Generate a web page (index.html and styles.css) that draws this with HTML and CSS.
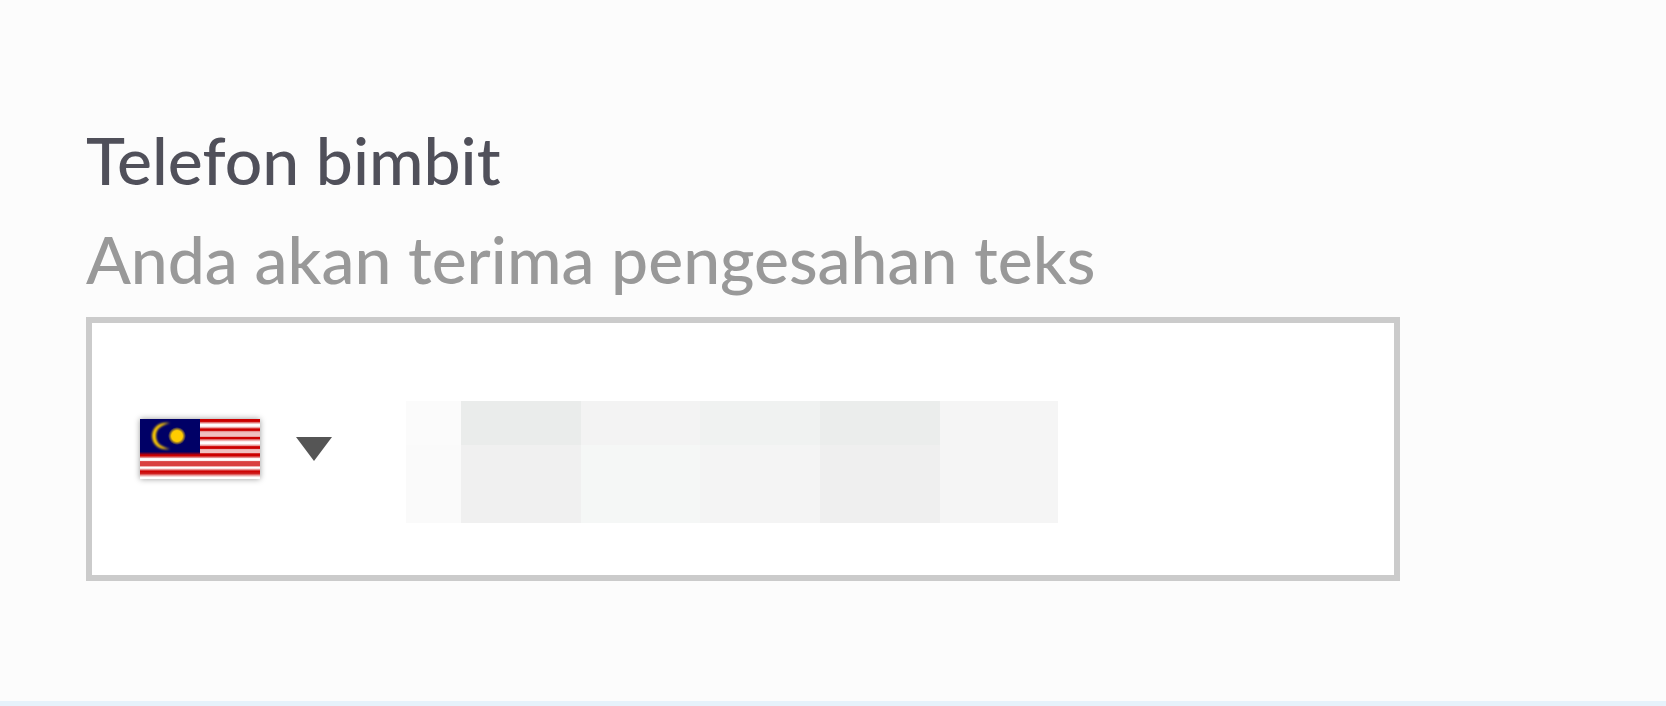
FILE: index.html
```html
<!DOCTYPE html>
<html lang="ms">
<head>
<meta charset="utf-8">
<meta name="viewport" content="width=device-width, initial-scale=1">
<title>Telefon bimbit</title>
<link rel="stylesheet" href="styles.css">
</head>
<body>
<main class="form">
  <label class="label" for="phone">Telefon bimbit</label>
  <p class="hint" id="phone-hint">Anda akan terima pengesahan teks</p>
  <div class="field">
    <button class="country" type="button" aria-label="Malaysia" aria-haspopup="listbox">
      <svg class="flag" viewBox="0 0 120 60" aria-hidden="true">
        <defs>
          <linearGradient id="stripes" x1="0" y1="0" x2="0" y2="60" gradientUnits="userSpaceOnUse">
            <stop offset="0" stop-color="#c00"/><stop offset=".04" stop-color="#c00"/>
            <stop offset=".06" stop-color="#e58080"/><stop offset=".09" stop-color="#fff"/><stop offset=".12" stop-color="#fff"/>
            <stop offset=".15" stop-color="#e58080"/>
            <stop offset=".165" stop-color="#c00"/><stop offset=".19" stop-color="#c00"/>
            <stop offset=".21" stop-color="#e8a0a0"/><stop offset=".23" stop-color="#f0c0c0"/>
            <stop offset=".29" stop-color="#f0c0c0"/><stop offset=".3" stop-color="#c00"/>
            <stop offset=".325" stop-color="#c00"/><stop offset=".345" stop-color="#e58080"/>
            <stop offset=".38" stop-color="#fff"/><stop offset=".41" stop-color="#fff"/>
            <stop offset=".45" stop-color="#e58080"/><stop offset=".46" stop-color="#c00"/>
            <stop offset=".49" stop-color="#c00"/><stop offset=".51" stop-color="#f0c0c0"/>
            <stop offset=".56" stop-color="#f0c0c0"/><stop offset=".58" stop-color="#c00"/>
            <stop offset=".61" stop-color="#c00"/><stop offset=".64" stop-color="#e58080"/>
            <stop offset=".66" stop-color="#fff"/><stop offset=".69" stop-color="#fff"/>
            <stop offset=".71" stop-color="#d94040"/><stop offset=".78" stop-color="#d94040"/>
            <stop offset=".8" stop-color="#fff"/><stop offset=".82" stop-color="#fff"/>
            <stop offset=".85" stop-color="#e06666"/><stop offset=".87" stop-color="#c00"/>
            <stop offset=".91" stop-color="#d02020"/><stop offset=".94" stop-color="#e8a0a0"/>
            <stop offset=".97" stop-color="#fff"/><stop offset="1" stop-color="#fff"/>
          </linearGradient>
          <linearGradient id="canton" x1="0" y1="0" x2="0" y2="1">
            <stop offset="0" stop-color="#006"/><stop offset=".91" stop-color="#006"/>
            <stop offset="1" stop-color="#c00"/>
          </linearGradient>
          <radialGradient id="sun">
            <stop offset="0" stop-color="#fc0"/><stop offset=".6" stop-color="#fc0"/>
            <stop offset="1" stop-color="#fc0" stop-opacity="0"/>
          </radialGradient>
          <filter id="soft"><feGaussianBlur stdDeviation=".9"/></filter>
        </defs>
        <path fill="url(#stripes)" d="M0 0h120v60H0z"/>
        <path fill="url(#canton)" d="M0 0h60v36H0z"/>
        <path fill="#fc0" filter="url(#soft)" d="M30 4C19 2 12 9 12 17s7 15 18 13C21 28 16 24 16 17S21 6 30 4z"/>
        <circle cx="37" cy="17" r="9" fill="url(#sun)"/>
      </svg>
      <svg class="caret" viewBox="0 0 36 24" aria-hidden="true"><path fill="#555" d="M0 0h36L18 24z"/></svg>
    </button>
    <div class="number">
      <input class="input" id="phone" type="tel" aria-describedby="phone-hint">
      <svg class="mask" viewBox="0 0 652 122" aria-hidden="true" shape-rendering="crispEdges">
        <path fill="#fbfbfb" d="M0 0h55v44H0z"/>
        <path fill="#eaeceb" d="M55 0h120v44H55z"/>
        <path fill="#f3f3f3" d="M175 0h119v44H175z"/>
        <path fill="#f0f2f1" d="M294 0h120v44H294z"/>
        <path fill="#ebedec" d="M414 0h120v44H414z"/>
        <path fill="#f5f5f5" d="M534 0h118v44H534z"/>
        <path fill="#fafafa" d="M0 44h55v78H0z"/>
        <path fill="#f0f0f0" d="M55 44h120v78H55z"/>
        <path fill="#f5f7f6" d="M175 44h119v78H175z"/>
        <path fill="#f4f4f4" d="M294 44h120v78H294z"/>
        <path fill="#efefef" d="M414 44h120v78H414z"/>
        <path fill="#f5f5f5" d="M534 44h118v78H534z"/>
      </svg>
    </div>
  </div>
</main>
<footer class="band"></footer>
</body>
</html>
```
FILE: styles.css
```css
* {
  box-sizing: border-box;
}

body {
  display: flex;
  flex-direction: column;
  min-height: 100vh;
  margin: 0;
  background: #fcfcfc;
  font-family: Lato, sans-serif;
  font-size: 66px;
  font-weight: 500;
  line-height: 99px;
}

.form {
  flex: 1;
  padding: 110px 266px 120px 86px;
}

.label {
  display: block;
  color: #50505a;
}

.hint {
  margin: 0 0 9px;
  color: #999;
}

.field {
  display: flex;
  border: 6px solid #cbcbcb;
  background: #fff;
}

.country {
  display: flex;
  align-items: center;
  gap: 36px;
  padding: 0 48px;
  border: 0;
  background: none;
}

.flag {
  width: 120px;
  height: 60px;
  box-shadow: 0 0 6px rgba(0, 0, 0, 0.4);
}

.caret {
  width: 36px;
  height: 24px;
}

.number {
  display: grid;
  flex: 1;
  min-width: 0;
}

.input,
.mask {
  grid-area: 1 / 1;
}

.input {
  width: 100%;
  padding: 0 26px;
  border: 0;
  outline: 0;
  background: none;
  font: inherit;
  color: #50505a;
}

.mask {
  width: 652px;
  max-width: 100%;
  margin: 78px 26px 52px;
  pointer-events: none;
}

.band {
  height: 5px;
  background: #e6f2fb;
}
```
